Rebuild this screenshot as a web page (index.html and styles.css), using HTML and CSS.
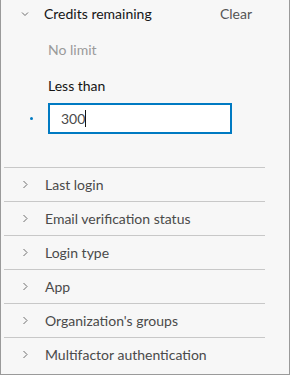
FILE: index.html
```html
<!DOCTYPE html>
<html>
<head>
    <title>Filters</title>
    <link rel="stylesheet" href="styles.css">
</head>
<body>
    <div class="filter-panel">
        <div class="filter-section open">
            <div class="section-head">
                <svg class="chevron" width="8" height="8" viewBox="0 0 8 8"><path d="M1 2.5 L4 5.5 L7 2.5" fill="none" stroke="#6e6e6e" stroke-width="1"/></svg>
                <span class="section-title">Credits remaining</span>
                <a class="clear" href="#">Clear</a>
            </div>
            <div class="section-body">
                <div class="option muted">No limit</div>
                <div class="option label">Less than</div>
                <div class="input-row">
                    <span class="dot"></span>
                    <div class="value-input">300<span class="caret"></span></div>
                </div>
            </div>
        </div>

        <div class="filter-list">
            <div class="filter-row"><svg class="chevron" width="8" height="9" viewBox="0 0 8 9"><path d="M2.5 1 L6 4.5 L2.5 8" fill="none" stroke="#6e6e6e" stroke-width="1"/></svg><span>Last login</span></div>
            <div class="filter-row"><svg class="chevron" width="8" height="9" viewBox="0 0 8 9"><path d="M2.5 1 L6 4.5 L2.5 8" fill="none" stroke="#6e6e6e" stroke-width="1"/></svg><span>Email verification status</span></div>
            <div class="filter-row"><svg class="chevron" width="8" height="9" viewBox="0 0 8 9"><path d="M2.5 1 L6 4.5 L2.5 8" fill="none" stroke="#6e6e6e" stroke-width="1"/></svg><span>Login type</span></div>
            <div class="filter-row"><svg class="chevron" width="8" height="9" viewBox="0 0 8 9"><path d="M2.5 1 L6 4.5 L2.5 8" fill="none" stroke="#6e6e6e" stroke-width="1"/></svg><span>App</span></div>
            <div class="filter-row"><svg class="chevron" width="8" height="9" viewBox="0 0 8 9"><path d="M2.5 1 L6 4.5 L2.5 8" fill="none" stroke="#6e6e6e" stroke-width="1"/></svg><span>Organization's groups</span></div>
            <div class="filter-row"><svg class="chevron" width="8" height="9" viewBox="0 0 8 9"><path d="M2.5 1 L6 4.5 L2.5 8" fill="none" stroke="#6e6e6e" stroke-width="1"/></svg><span>Multifactor authentication</span></div>
        </div>
    </div>
</body>
</html>
```

FILE: styles.css
```css
html, body {
    margin: 0;
    padding: 0;
    background-color: #ffffff;
}

body {
    font-family: Lato, "Open Sans", sans-serif;
    font-size: 14px;
    color: #4a4a4a;
}

.filter-panel {
    width: 290px;
    height: 375px;
    box-sizing: border-box;
    background-color: #f7f7f7;
    border: 1px solid #9a9a9a;
    border-top: none;
}

.chevron {
    flex: none;
    display: block;
}

.section-head {
    display: flex;
    align-items: center;
    height: 27px;
    padding-left: 20px;
    padding-right: 37px;
}

.section-head .chevron {
    margin-right: 15px;
}

.section-title {
    flex: 1;
    color: #151515;
}

.clear {
    color: #555555;
    text-decoration: none;
}

.section-body {
    padding: 9px 0 33px 47px;
}

.option {
    height: 28px;
    line-height: 28px;
}

.option.muted {
    color: #9a9a9a;
}

.option.label {
    margin-top: 8px;
    color: #151515;
}

.input-row {
    display: flex;
    align-items: center;
    margin-left: -18px;
    margin-top: 3px;
}

.dot {
    width: 3px;
    height: 3px;
    border-radius: 50%;
    background-color: #007ac2;
    margin-right: 15px;
}

.value-input {
    width: 184px;
    height: 31px;
    box-sizing: border-box;
    border: 2px solid #007ac2;
    background-color: #ffffff;
    padding-left: 11px;
    display: flex;
    align-items: center;
    color: #4a4a4a;
}

.caret {
    display: inline-block;
    width: 1px;
    height: 17px;
    background-color: #151515;
}

.filter-list {
    margin: 0 24px 0 3px;
}

.filter-row {
    display: flex;
    align-items: center;
    height: 33px;
    border-top: 1px solid #c8c8c8;
    padding-left: 17px;
}

.filter-row .chevron {
    margin-right: 16px;
}
```
